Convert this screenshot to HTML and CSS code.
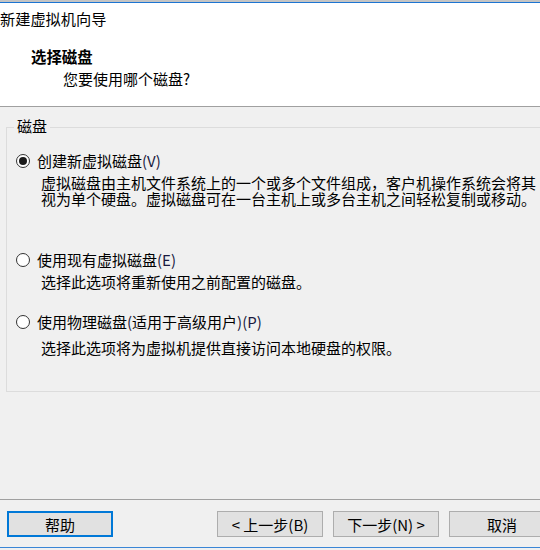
FILE: index.html
```
<!DOCTYPE html>
<html lang="zh-CN">
<head>
<meta charset="utf-8">
<title>新建虚拟机向导</title>
<link rel="stylesheet" href="styles.css">
</head>
<body>
<div class="window">
  <div class="topbar"></div>
  <div class="header">
    <div class="title">新建虚拟机向导</div>
    <div class="heading">选择磁盘</div>
    <div class="subheading">您要使用哪个磁盘?</div>
  </div>
  <div class="main">
    <div class="group">
      <div class="group-label">磁盘</div>
      <div class="option first">
        <span class="radio checked"></span>
        <span class="option-text">创建新虚拟磁盘<span class="key">(V)</span></span>
      </div>
      <div class="desc">虚拟磁盘由主机文件系统上的一个或多个文件组成，客户机操作系统会将其<br>视为单个硬盘。虚拟磁盘可在一台主机上或多台主机之间轻松复制或移动。</div>
      <div class="option second">
        <span class="radio"></span>
        <span class="option-text">使用现有虚拟磁盘<span class="key">(E)</span></span>
      </div>
      <div class="desc">选择此选项将重新使用之前配置的磁盘。</div>
      <div class="option third">
        <span class="radio"></span>
        <span class="option-text">使用物理磁盘<span class="key">(</span>适用于高级用户<span class="key">)(P)</span></span>
      </div>
      <div class="desc last">选择此选项将为虚拟机提供直接访问本地硬盘的权限。</div>
    </div>
  </div>
  <div class="footer">
    <div class="buttons">
      <div class="btn help">帮助</div>
      <div class="btn back">&lt; 上一步(B)</div>
      <div class="btn">下一步(N) &gt;</div>
      <div class="btn">取消</div>
    </div>
    <div class="bottomline"></div>
  </div>
</div>
</body>
</html>
```
FILE: styles.css
```
html, body {
  margin: 0;
  padding: 0;
}
body {
  width: 540px;
  height: 550px;
  overflow: hidden;
  background: #f0f0f0;
  font-family: "Noto Sans CJK SC", "Noto Sans", sans-serif;
  font-size: 15px;
  color: #000;
}
.window {
  display: flex;
  flex-direction: column;
  width: 540px;
  height: 550px;
}
.topbar {
  height: 2px;
  background: #c4c4c4;
  border-bottom: 1px solid #1c74d2;
  flex: none;
}
.header {
  background: #fff;
  height: 103px;
  border-bottom: 1px solid #a0a0a0;
  flex: none;
}
.title {
  margin-top: 5px;
  line-height: 20px;
  height: 20px;
  font-size: 15.2px;
  white-space: nowrap;
}
.heading {
  margin-top: 19px;
  margin-left: 31px;
  font-weight: bold;
  font-size: 15.4px;
  line-height: 18px;
  height: 18px;
}
.subheading {
  margin-top: 5px;
  margin-left: 63px;
  line-height: 18px;
  height: 18px;
}
.main {
  height: 392px;
  flex: none;
  overflow: hidden;
}
.group {
  margin-top: 20px;
  margin-left: 6px;
  width: 560px;
  height: 263px;
  border: 1px solid #dcdcdc;
}
.group-label {
  margin-top: -11px;
  margin-left: 7px;
  padding: 0 3px;
  width: fit-content;
  background: #f0f0f0;
  line-height: 18px;
  height: 18px;
}
.option {
  display: flex;
  align-items: center;
  height: 16px;
  line-height: 16px;
  white-space: nowrap;
}
.option.first { margin-top: 18px; }
.option.second { margin-top: 45px; }
.option.third { margin-top: 24px; }
.radio {
  width: 12px;
  height: 12px;
  border: 1px solid #333;
  border-radius: 50%;
  background: #fff;
  margin-left: 9px;
  margin-right: 7px;
  display: flex;
  align-items: center;
  justify-content: center;
  flex: none;
}
.radio.checked::after {
  content: "";
  width: 8px;
  height: 8px;
  border-radius: 50%;
  background: #1a1a1a;
}
.key {
  color: #1a1a40;
}
.desc {
  margin-top: 6px;
  margin-left: 34px;
  line-height: 16px;
  white-space: nowrap;
}
.desc.last { margin-top: 10px; }
.footer {
  flex: 1;
  border-top: 1px solid #a0a0a0;
  display: flex;
  flex-direction: column;
}
.buttons {
  display: flex;
  margin-top: 11px;
  margin-left: 7px;
  gap: 10px;
  width: 560px;
}
.btn {
  box-sizing: border-box;
  width: 106px;
  height: 26px;
  border: 1px solid #adadad;
  background: #e1e1e1;
  display: flex;
  align-items: center;
  justify-content: center;
  font-size: 15px;
  white-space: nowrap;
  flex: none;
}
.btn.help {
  border: 2px solid #0078d7;
}
.btn.back {
  margin-left: 94px;
}
.bottomline {
  margin-top: 10px;
  height: 1px;
  background: #3a86d6;
}
```
